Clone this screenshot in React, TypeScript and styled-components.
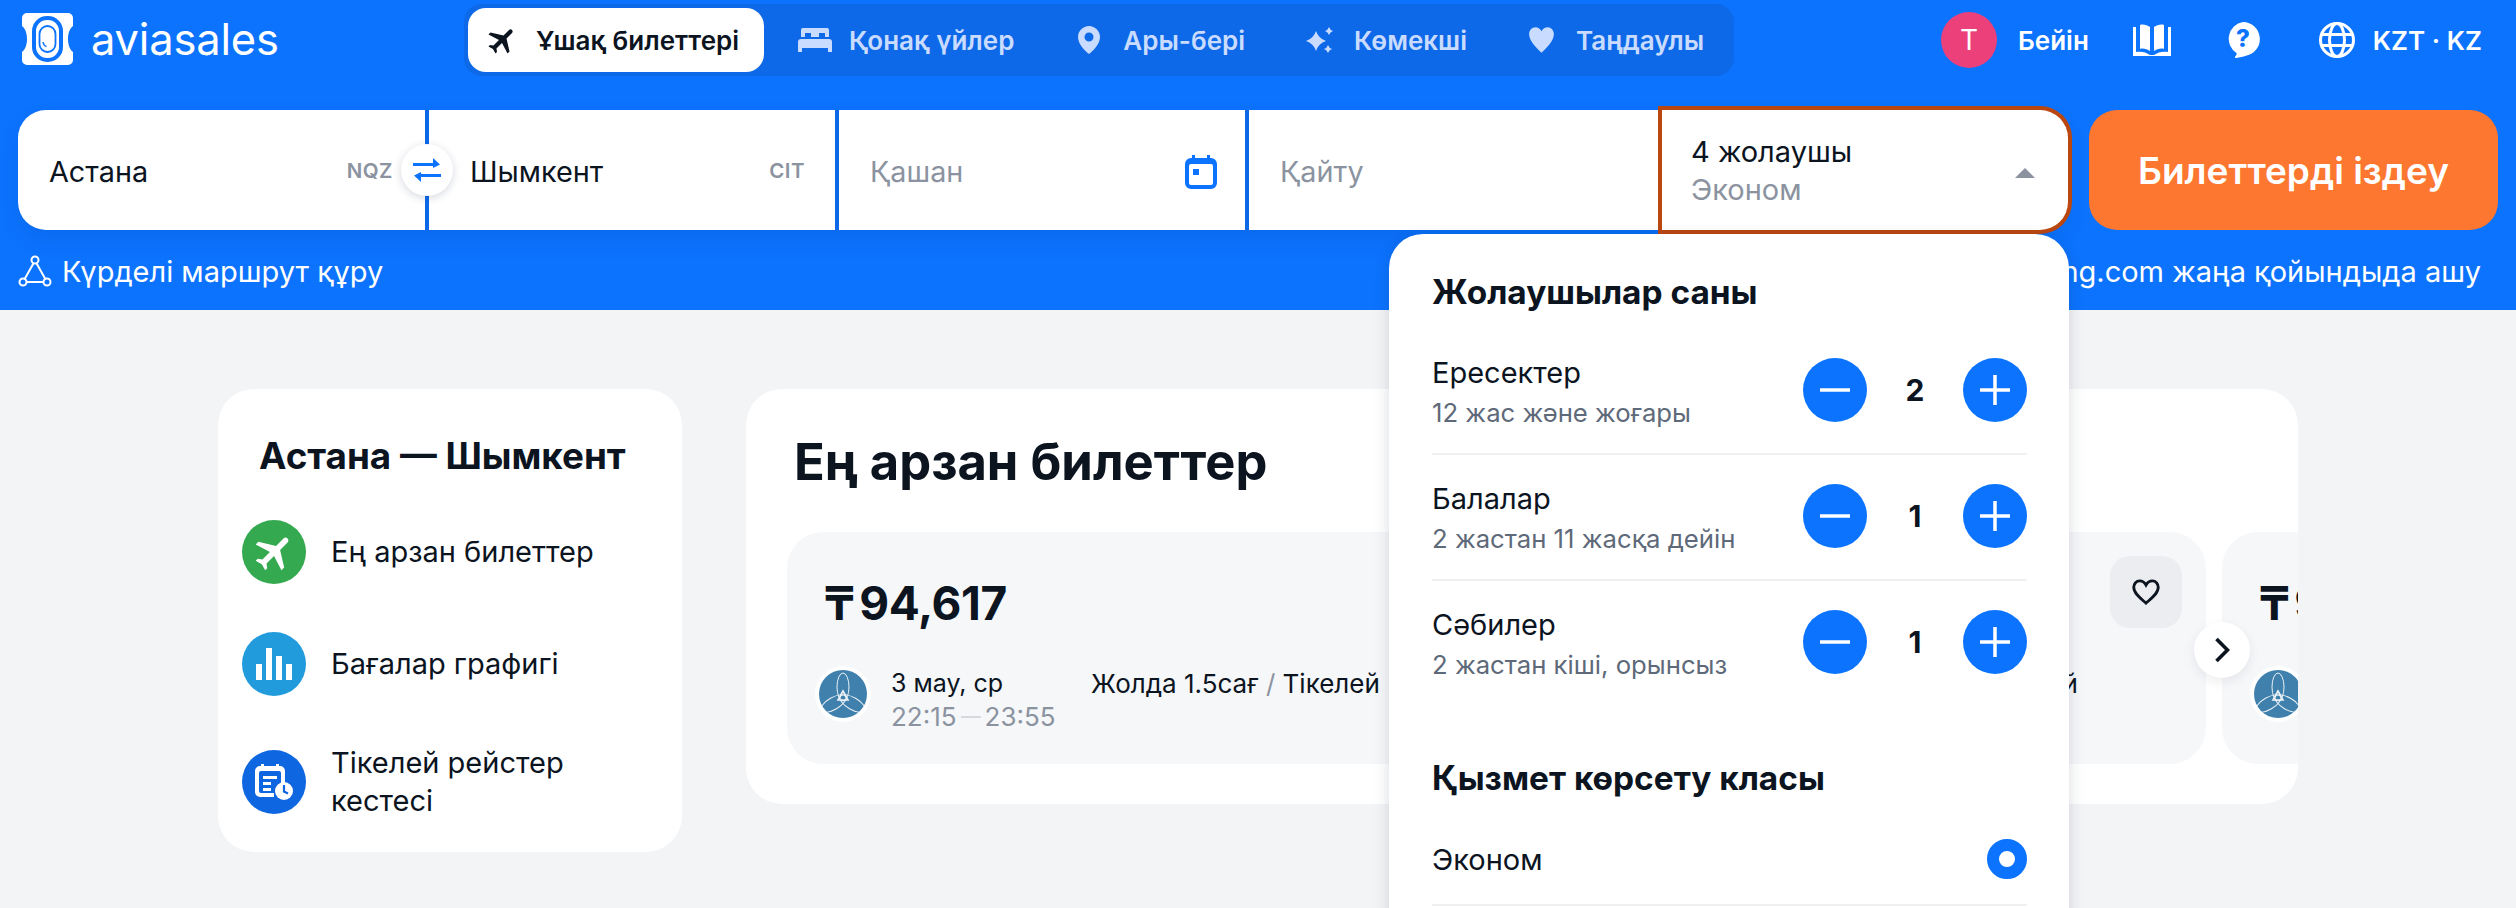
import React from "react";
import styled, { createGlobalStyle } from "styled-components";

const Global = createGlobalStyle`
  html, body { margin: 0; padding: 0; background: #f3f4f6; }
  body { font-family: Inter, "Noto Sans", "Liberation Sans", sans-serif; color: #0b141f; }
  #root { width: 2516px; height: 908px; overflow: hidden; }
`;

const Page = styled.div`
  position: relative;
  width: 2516px;
  height: 908px;
  overflow: hidden;
  background: #f3f4f6;
`;

const Header = styled.header`
  height: 310px;
  background: #0c73fe;
  display: flex;
  flex-direction: column;
`;

const TopBar = styled.div`
  height: 72px;
  padding-top: 4px;
  padding-bottom: 4px;
  display: flex;
  align-items: center;
`;

const LogoWrap = styled.div`
  display: flex;
  align-items: center;
  width: 464px;
  padding-left: 22px;
  box-sizing: border-box;
  gap: 18px;
  margin-top: -2px;
`;

const LogoText = styled.span`
  font-size: 43.5px;
  font-weight: 400;
  color: #fff;
  letter-spacing: -0.2px;
  line-height: 52px;
`;

const Tabs = styled.nav`
  display: flex;
  align-items: center;
  gap: 17px;
  width: 1270px;
  height: 72px;
  box-sizing: border-box;
  padding: 4px;
  background: #0e69e8;
  border-radius: 18px;
`;

const Tab = styled.div<{ $active?: boolean }>`
  display: flex;
  align-items: center;
  gap: 17px;
  height: 64px;
  padding: 0 ${(p) => (p.$active ? 25 : 24)}px 0 17px;
  border-radius: 18px;
  font-size: 26px;
  font-weight: 600;
  white-space: nowrap;
  background: ${(p) => (p.$active ? "#fff" : "transparent")};
  color: ${(p) => (p.$active ? "#0b141f" : "#c9dcff")};
`;

const TabIcon = styled.span`
  flex: none;
  width: 34px;
  display: flex;
  justify-content: center;
`;

const RightNav = styled.div`
  margin-left: 207px;
  display: flex;
  align-items: center;
`;

const Avatar = styled.div`
  width: 56px;
  height: 56px;
  border-radius: 50%;
  background: #ec407a;
  color: #fff;
  font-size: 28px;
  display: flex;
  align-items: center;
  justify-content: center;
`;

const NavLabel = styled.span<{ $ml: number }>`
  margin-left: ${(p) => p.$ml}px;
  font-size: 26px;
  font-weight: 600;
  color: #fff;
  white-space: nowrap;
`;

const NavIcon = styled.span<{ $ml: number }>`
  margin-left: ${(p) => p.$ml}px;
  display: flex;
`;

const SearchRow = styled.div`
  margin-top: 30px;
  padding-left: 18px;
  display: flex;
  align-items: stretch;
  height: 120px;
`;

const Fields = styled.div`
  position: relative;
  display: flex;
  gap: 4px;
  background: #0b69e8;
  border-radius: 28px;
  box-shadow: 0 10px 20px rgba(4, 60, 150, 0.14);
`;

const Field = styled.div<{ $w: number; $pl: number; $pr: number; $first?: boolean; $focus?: boolean }>`
  position: relative;
  width: ${(p) => p.$w}px;
  box-sizing: border-box;
  padding: 3px ${(p) => p.$pr}px 0 ${(p) => p.$pl}px;
  background: #fff;
  display: flex;
  align-items: center;
  justify-content: space-between;
  font-size: 28.8px;
  border-radius: ${(p) => (p.$first ? "28px 0 0 28px" : p.$focus ? "0 28px 28px 0" : "0")};
  box-shadow: ${(p) => (p.$focus ? "0 0 0 4px #bb4710" : "none")};
  z-index: ${(p) => (p.$focus ? 1 : 0)};
`;

const Placeholder = styled.span`
  color: #8b93a0;
`;

const Code = styled.span`
  font-size: 20.5px;
  font-weight: 600;
  color: #8b93a0;
  letter-spacing: 0.5px;
  margin-top: -3px;
`;

const Stack = styled.div`
  display: flex;
  flex-direction: column;
  font-size: 29px;
  line-height: 38px;
  margin-top: -2px;
`;

const Triangle = styled.span`
  width: 0;
  height: 0;
  border-left: 10px solid transparent;
  border-right: 10px solid transparent;
  border-bottom: 10px solid #8b93a0;
  margin-right: 12px;
  margin-top: 2px;
`;

const Swap = styled.div`
  position: absolute;
  left: 383px;
  top: 34px;
  width: 52px;
  height: 52px;
  border-radius: 50%;
  background: #fff;
  box-shadow: 0 2px 8px rgba(20, 40, 80, 0.18);
  display: flex;
  align-items: center;
  justify-content: center;
  z-index: 2;
`;

const SearchButton = styled.div`
  margin-left: 21px;
  width: 409px;
  border-radius: 28px;
  background: #fd7730;
  color: #fff;
  font-size: 37px;
  font-weight: 600;
  display: flex;
  align-items: center;
  justify-content: center;
`;

const SubRow = styled.div`
  height: 80px;
  padding: 2px 35px 0 18px;
  box-sizing: border-box;
  display: flex;
  align-items: center;
  justify-content: space-between;
  color: #fff;
  font-size: 29px;
`;

const RouteLink = styled.div`
  display: flex;
  align-items: center;
  gap: 10px;
`;

const Main = styled.main`
  padding: 79px 0 0 218px;
  display: flex;
  align-items: flex-start;
  gap: 64px;
`;

const SideCard = styled.aside`
  width: 464px;
  height: 463px;
  box-sizing: border-box;
  background: #fff;
  border-radius: 36px;
  padding: 47px 24px 32px;
`;

const SideTitle = styled.h2`
  margin: 0 0 44px 17px;
  font-size: 36.8px;
  line-height: 40px;
  font-weight: 700;
  white-space: nowrap;
`;

const SideList = styled.div`
  display: flex;
  flex-direction: column;
  gap: 48px;
`;

const SideItem = styled.div`
  display: flex;
  align-items: center;
  gap: 25px;
  font-size: 29px;
  line-height: 38px;
`;

const SideIcon = styled.span<{ $bg: string }>`
  flex: none;
  width: 64px;
  height: 64px;
  border-radius: 50%;
  background: ${(p) => p.$bg};
  display: flex;
  align-items: center;
  justify-content: center;
`;

const ContentCard = styled.section`
  position: relative;
  width: 1552px;
  height: 415px;
  box-sizing: border-box;
  background: #fff;
  border-radius: 36px;
  padding: 43px 0 40px 41px;
  overflow: hidden;
`;

const ContentTitle = styled.h1`
  margin: 0 0 40px 7px;
  font-size: 50.7px;
  line-height: 60px;
  font-weight: 700;
  white-space: nowrap;
`;

const Tickets = styled.div`
  display: flex;
  gap: 16px;
`;

const Ticket = styled.article<{ $pl: number }>`
  position: relative;
  flex: none;
  width: 1419px;
  height: 232px;
  box-sizing: border-box;
  background: #f6f7f9;
  border-radius: 36px;
  padding: 41px 0 0 ${(p) => p.$pl}px;
`;

const Price = styled.div`
  margin-left: 9px;
  font-size: 46px;
  line-height: 60px;
  font-weight: 700;
  letter-spacing: -0.4px;
  white-space: nowrap;
  display: flex;
  gap: 5px;
`;

const Legs = styled.div`
  margin-top: 33px;
  display: flex;
  gap: 124px;
`;

const Leg = styled.div`
  display: flex;
  width: 574px;
  flex: none;
`;

const LegLogo = styled.span`
  flex: none;
  width: 56px;
  height: 56px;
  border-radius: 50%;
  background: #fff;
  display: flex;
  align-items: center;
  justify-content: center;
`;

const LegDates = styled.div`
  width: 200px;
  margin-left: 20px;
  padding-top: 1px;
  font-size: 25px;
  line-height: 33px;
  white-space: nowrap;
`;

const Times = styled.div`
  color: #8b93a0;
  display: flex;
  align-items: center;
  gap: 4px;
  font-size: 26px;
`;

const Dash = styled.span`
  display: inline-block;
  width: 20px;
  height: 2px;
  background: #d6d9de;
`;

const LegRoute = styled.div`
  padding-top: 1px;
  font-size: 26px;
  line-height: 33px;
  white-space: nowrap;
`;

const Slash = styled.span`
  color: #8b93a0;
`;

const HeartButton = styled.div`
  position: absolute;
  top: 24px;
  right: 24px;
  width: 72px;
  height: 72px;
  border-radius: 20px;
  background: #ebedf0;
  display: flex;
  align-items: center;
  justify-content: center;
`;

const NextButton = styled.div`
  position: absolute;
  top: 233px;
  right: 48px;
  width: 56px;
  height: 56px;
  border-radius: 50%;
  background: #fff;
  box-shadow: 0 4px 12px rgba(20, 30, 50, 0.08);
  display: flex;
  align-items: center;
  justify-content: center;
`;

const Dropdown = styled.div`
  position: absolute;
  left: 1389px;
  top: 234px;
  width: 680px;
  box-sizing: border-box;
  padding: 40px 42px 40px 43px;
  background: #fff;
  border-radius: 34px 34px 0 0;
  box-shadow: 0 4px 16px rgba(20, 30, 50, 0.16);
  z-index: 5;
`;

const DropTitle = styled.h3<{ $mt?: number }>`
  margin: ${(p) => p.$mt ?? 0}px 0 0;
  font-size: 33.4px;
  line-height: 36px;
  font-weight: 700;
  white-space: nowrap;
`;

const CountRow = styled.div<{ $last?: boolean }>`
  display: flex;
  align-items: flex-start;
  justify-content: space-between;
  padding: 26px 0 24px;
  border-bottom: 2px solid ${(p) => (p.$last ? "transparent" : "#eff0f2")};
`;

const Labels = styled.div`
  display: flex;
  flex-direction: column;
`;

const Label = styled.span`
  font-size: 29px;
  line-height: 36px;
`;

const Sub = styled.span`
  margin-top: 6px;
  font-size: 25.7px;
  line-height: 32px;
  color: #5e6979;
`;

const Counter = styled.div`
  display: flex;
  align-items: center;
  margin-top: 3px;
`;

const RoundButton = styled.span`
  width: 64px;
  height: 64px;
  border-radius: 50%;
  background: #0c73fe;
  display: flex;
  align-items: center;
  justify-content: center;
`;

const Count = styled.span`
  width: 96px;
  text-align: center;
  font-size: 30px;
  font-weight: 700;
`;

const FirstRow = styled.div`
  margin-top: 19px;
`;

const ClassRow = styled.div`
  display: flex;
  align-items: center;
  justify-content: space-between;
  padding: 43px 0 25px;
  border-bottom: 2px solid #eff0f2;
  font-size: 29px;
`;

const Radio = styled.span`
  width: 40px;
  height: 40px;
  box-sizing: border-box;
  border-radius: 50%;
  border: 12px solid #0c73fe;
  background: #fff;
`;

const PLANE =
  "M21 16v-2l-8-5V3.5c0-.83-.67-1.5-1.5-1.5S10 2.67 10 3.5V9l-8 5v2l8-2.5V19l-2 1.5V22l3.5-1 3.5 1v-1.5L13 19v-5.5l8 2.5z";

const Plane = ({ size, color }: { size: number; color: string }) => (
  <svg width={size} height={size} viewBox="0 0 24 24">
    <path d={PLANE} fill={color} transform="rotate(45 12 12) translate(0.500 0)" />
  </svg>
);

const Logo = () => (
  <svg width="51" height="52" viewBox="0 0 51 52">
    <path
      d="M5 0h41a5 5 0 0 1 5 5v8c-3 2-5 7-5 13s2 11 5 13v8a5 5 0 0 1-5 5H5a5 5 0 0 1-5-5v-8c3-2 5-7 5-13S3 15 0 13V5a5 5 0 0 1 5-5z"
      fill="#fff"
    />
    <rect x="10" y="3" width="31" height="46" rx="15" fill="#0c73fe" />
    <rect x="14" y="7" width="23" height="38" rx="11" fill="#fff" />
    <rect x="17.500" y="13" width="16" height="26" rx="8" fill="#fff" stroke="#0c73fe" strokeWidth="1.800" />
    <path d="M21 29c.4 2.500 1.500 4 3.500 4.500" fill="none" stroke="#0c73fe" strokeWidth="1.400" />
  </svg>
);

const Bed = () => (
  <svg width="34" height="24" viewBox="0 0 34 24" fill="#c9dcff">
    <path d="M3 2a2 2 0 0 1 2-2h24a2 2 0 0 1 2 2v7h-4V5h-6v4h-8V5H7v4H3z" />
    <path d="M3 11h28a3 3 0 0 1 3 3v10h-4v-4H4v4H0V14a3 3 0 0 1 3-3z" />
  </svg>
);

const Pin = () => (
  <svg width="22" height="28" viewBox="0 0 22 28">
    <path
      fillRule="evenodd"
      d="M11 0C5 0 0 5 0 11c0 7 7 14 11 17 4-3 11-10 11-17C22 5 17 0 11 0zm0 6.500a4.500 4.500 0 1 1 0 9 4.500 4.500 0 0 1 0-9z"
      fill="#c9dcff"
    />
  </svg>
);

const Sparks = () => (
  <svg width="28" height="26" viewBox="0 0 28 26" fill="#c9dcff">
    <path d="M10 4Q12.500 11.500 20 14Q12.500 16.500 10 24Q7.500 16.500 0 14Q7.500 11.500 10 4z" />
    <path d="M23 0Q24 3 27 4Q24 5 23 8Q22 5 19 4Q22 3 23 0z" />
    <path d="M22 18Q23 21 26 22Q23 23 22 26Q21 23 18 22Q21 21 22 18z" />
  </svg>
);

const HeartFilled = () => (
  <svg width="27" height="28" viewBox="0 0 24 24" preserveAspectRatio="none">
    <path
      d="M12 23C8 19 1 13 1 7c0-3.500 2.500-6 5.500-6 2.300 0 4.300 1.300 5.500 3.500C13.200 2.300 15.200 1 17.500 1 20.500 1 23 3.500 23 7c0 6-7 12-11 16z"
      fill="#c9dcff"
    />
  </svg>
);

const Book = () => (
  <svg width="40" height="32" viewBox="0 0 40 32" fill="#fff">
    <path d="M8 1c3-1 7 0 10 2v24c-3-2-7-3-10-2z" />
    <path d="M32 1c-3-1-7 0-10 2v24c3-2 7-3 10-2z" />
    <path d="M1 3h3v25c5-1 10 0 14 3h4c4-3 9-4 14-3V3h3v29H1z" />
  </svg>
);

const Help = () => (
  <svg width="36" height="36" viewBox="0 0 36 36">
    <path
      d="M18 0a17 17 0 0 1 3 33.700c-3 .8-6 1.800-10 2.300-1 .1-1.400-.8-.8-1.500.9-1 1.500-2 1.500-3.300A17 17 0 0 1 18 0z"
      fill="#fff"
    />
    <text x="18" y="25" textAnchor="middle" fontSize="24" fontWeight="800" fontFamily="Inter, sans-serif" fill="#0c73fe">
      ?
    </text>
  </svg>
);

const Globe = () => (
  <svg width="36" height="36" viewBox="0 0 36 36" fill="none" stroke="#fff" strokeWidth="3">
    <circle cx="18" cy="18" r="16.500" />
    <ellipse cx="18" cy="18" rx="7.500" ry="16.500" />
    <path d="M3 12.500h30M3 23.500h30" />
  </svg>
);

const SwapIcon = () => (
  <svg width="28" height="24" viewBox="0 0 28 24" fill="#0c73fe">
    <path d="M0 5h20V0l7 6.500L20 10V8H0zM28 16H8v-2L1 17.500 8 24v-5h20z" />
  </svg>
);

const Calendar = () => (
  <svg width="32" height="34" viewBox="0 0 32 34">
    <path
      fillRule="evenodd"
      d="M7 0h3v3h12V0h3v3h1a6 6 0 0 1 6 6v19a6 6 0 0 1-6 6H6a6 6 0 0 1-6-6V9a6 6 0 0 1 6-6h1zM6 9a2 2 0 0 0-2 2v17a2 2 0 0 0 2 2h20a2 2 0 0 0 2-2V11a2 2 0 0 0-2-2z"
      fill="#0c73fe"
    />
    <rect x="8" y="14" width="6" height="6" fill="#0c73fe" />
  </svg>
);

const RouteIcon = () => (
  <svg width="34" height="32" viewBox="0 0 34 32" fill="none" stroke="#fff" strokeWidth="2">
    <circle cx="17" cy="5" r="3.500" />
    <circle cx="5" cy="27" r="3.500" />
    <circle cx="29" cy="27" r="3.500" />
    <path d="M15.500 8.200 6.800 23.800M18.500 8.200l8.700 15.600M8.500 27h17" />
  </svg>
);

const Bars = () => (
  <svg width="36" height="32" viewBox="0 0 36 32" fill="#fff">
    <rect x="0" y="16" width="6" height="16" />
    <rect x="10" y="0" width="6" height="32" />
    <rect x="20" y="8" width="6" height="24" />
    <rect x="30" y="16" width="6" height="16" />
  </svg>
);

const Schedule = () => (
  <svg width="38" height="36" viewBox="0 0 38 36">
    <path
      fillRule="evenodd"
      d="M6 0h3v2h12V0h3v2h1a5 5 0 0 1 5 5v12h-4V9a2 2 0 0 0-2-2H6a2 2 0 0 0-2 2v18a2 2 0 0 0 2 2h13v4H5a5 5 0 0 1-5-5V7a5 5 0 0 1 5-5h1z"
      fill="#fff"
    />
    <path d="M8 12h14v3H8zM8 18h8v3H8zM8 24h8v3H8z" fill="#fff" />
    <circle cx="29" cy="27" r="9" fill="#fff" />
    <path d="M29 21v6.500l4 2" fill="none" stroke="#0e66e0" strokeWidth="2.200" />
  </svg>
);

const AirlineLogo = () => (
  <LegLogo>
    <svg width="48" height="48" viewBox="0 0 48 48">
      <circle cx="24" cy="24" r="24" fill="#3f80ad" />
      <g fill="none" stroke="#fff" strokeWidth="1" opacity="0.9">
        <ellipse cx="24" cy="17" rx="6" ry="14" />
        <ellipse cx="24" cy="17" rx="6" ry="14" transform="rotate(120 24 28)" />
        <ellipse cx="24" cy="17" rx="6" ry="14" transform="rotate(240 24 28)" />
        <path d="M24 21l5 9h-10z" strokeWidth="1.600" />
      </g>
    </svg>
  </LegLogo>
);

const RouteLeg = () => (
  <Leg>
    <AirlineLogo />
    <LegDates>
      <div>3 мау, ср</div>
      <Times>
        22:15
        <Dash />
        23:55
      </Times>
    </LegDates>
    <LegRoute>
      Жолда 1.5сағ <Slash>/</Slash> Тікелей
    </LegRoute>
  </Leg>
);

const Minus = () => (
  <svg width="30" height="30" viewBox="0 0 30 30">
    <path d="M0 15h30" stroke="#fff" strokeWidth="3.500" />
  </svg>
);

const PlusIcon = () => (
  <svg width="30" height="30" viewBox="0 0 30 30">
    <path d="M0 15h30M15 0v30" stroke="#fff" strokeWidth="3.500" />
  </svg>
);

const CounterRow = ({ label, sub, value, last }: { label: string; sub: string; value: number; last?: boolean }) => (
  <CountRow $last={last}>
    <Labels>
      <Label>{label}</Label>
      <Sub>{sub}</Sub>
    </Labels>
    <Counter>
      <RoundButton>
        <Minus />
      </RoundButton>
      <Count>{value}</Count>
      <RoundButton>
        <PlusIcon />
      </RoundButton>
    </Counter>
  </CountRow>
);

export default function App() {
  return (
    <Page>
      <Global />
      <Header>
        <TopBar>
          <LogoWrap>
            <Logo />
            <LogoText>aviasales</LogoText>
          </LogoWrap>
          <Tabs>
            <Tab $active>
              <TabIcon>
                <Plane size={36} color="#0b141f" />
              </TabIcon>
              Ұшақ билеттері
            </Tab>
            <Tab>
              <TabIcon>
                <Bed />
              </TabIcon>
              Қонақ үйлер
            </Tab>
            <Tab>
              <TabIcon>
                <Pin />
              </TabIcon>
              Ары-бері
            </Tab>
            <Tab>
              <TabIcon>
                <Sparks />
              </TabIcon>
              Көмекші
            </Tab>
            <Tab>
              <TabIcon>
                <HeartFilled />
              </TabIcon>
              Таңдаулы
            </Tab>
          </Tabs>
          <RightNav>
            <Avatar>Т</Avatar>
            <NavLabel $ml={21}>Бейін</NavLabel>
            <NavIcon $ml={43}>
              <Book />
            </NavIcon>
            <NavIcon $ml={53}>
              <Help />
            </NavIcon>
            <NavIcon $ml={58}>
              <Globe />
            </NavIcon>
            <NavLabel $ml={18}>KZT · KZ</NavLabel>
          </RightNav>
        </TopBar>
        <SearchRow>
          <Fields>
            <Field $w={407} $pl={31} $pr={32} $first>
              Астана
              <Code>NQZ</Code>
            </Field>
            <Swap>
              <SwapIcon />
            </Swap>
            <Field $w={406} $pl={41} $pr={30}>
              Шымкент
              <Code>CIT</Code>
            </Field>
            <Field $w={406} $pl={31} $pr={28}>
              <Placeholder>Қашан</Placeholder>
              <Calendar />
            </Field>
            <Field $w={409} $pl={31} $pr={20}>
              <Placeholder>Қайту</Placeholder>
            </Field>
            <Field $w={406} $pl={29} $pr={21} $focus>
              <Stack>
                <span>4 жолаушы</span>
                <Placeholder>Эконом</Placeholder>
              </Stack>
              <Triangle />
            </Field>
          </Fields>
          <SearchButton>Билеттерді іздеу</SearchButton>
        </SearchRow>
        <SubRow>
          <RouteLink>
            <RouteIcon />
            Күрделі маршрут құру
          </RouteLink>
          <span>Booking.com жаңа қойындыда ашу</span>
        </SubRow>
      </Header>
      <Main>
        <SideCard>
          <SideTitle>Астана — Шымкент</SideTitle>
          <SideList>
            <SideItem>
              <SideIcon $bg="#35a94f">
                <Plane size={46} color="#fff" />
              </SideIcon>
              Ең арзан билеттер
            </SideItem>
            <SideItem>
              <SideIcon $bg="#229bdc">
                <Bars />
              </SideIcon>
              Бағалар графигі
            </SideItem>
            <SideItem>
              <SideIcon $bg="#0e66e0">
                <Schedule />
              </SideIcon>
              <span>
                Тікелей рейстер
                <br />
                кестесі
              </span>
            </SideItem>
          </SideList>
        </SideCard>
        <ContentCard>
          <ContentTitle>Ең арзан билеттер</ContentTitle>
          <Tickets>
            <Ticket $pl={28}>
              <Price>
                <span>₸</span>
                <span>94,617</span>
              </Price>
              <Legs>
                <RouteLeg />
                <RouteLeg />
              </Legs>
              <HeartButton>
                <svg width="28" height="26" viewBox="0 0 24 22" fill="none" stroke="#0b141f" strokeWidth="2.400">
                  <path d="M12 20.500C8 17 1.500 12.500 1.500 7c0-3 2.300-5.500 5-5.500 2.200 0 4.300 1.300 5.500 3.500 1.200-2.200 3.300-3.500 5.500-3.500 2.700 0 5 2.500 5 5.500 0 5.500-6.500 10-10.500 13.500z" />
                </svg>
              </HeartButton>
            </Ticket>
            <Ticket $pl={28}>
              <Price>
                <span>₸</span>
                <span>94,617</span>
              </Price>
              <Legs>
                <RouteLeg />
              </Legs>
            </Ticket>
          </Tickets>
          <NextButton>
            <svg width="16" height="26" viewBox="0 0 16 26" fill="none" stroke="#0b141f" strokeWidth="3.600">
              <path d="M2.500 2l11 11-11 11" />
            </svg>
          </NextButton>
        </ContentCard>
      </Main>
      <Dropdown>
        <DropTitle>Жолаушылар саны</DropTitle>
        <FirstRow>
          <CounterRow label="Ересектер" sub="12 жас және жоғары" value={2} />
          <CounterRow label="Балалар" sub="2 жастан 11 жасқа дейін" value={1} />
          <CounterRow label="Сәбилер" sub="2 жастан кіші, орынсыз" value={1} last />
        </FirstRow>
        <DropTitle $mt={53}>Қызмет көрсету класы</DropTitle>
        <ClassRow>
          Эконом
          <Radio />
        </ClassRow>
      </Dropdown>
    </Page>
  );
}
